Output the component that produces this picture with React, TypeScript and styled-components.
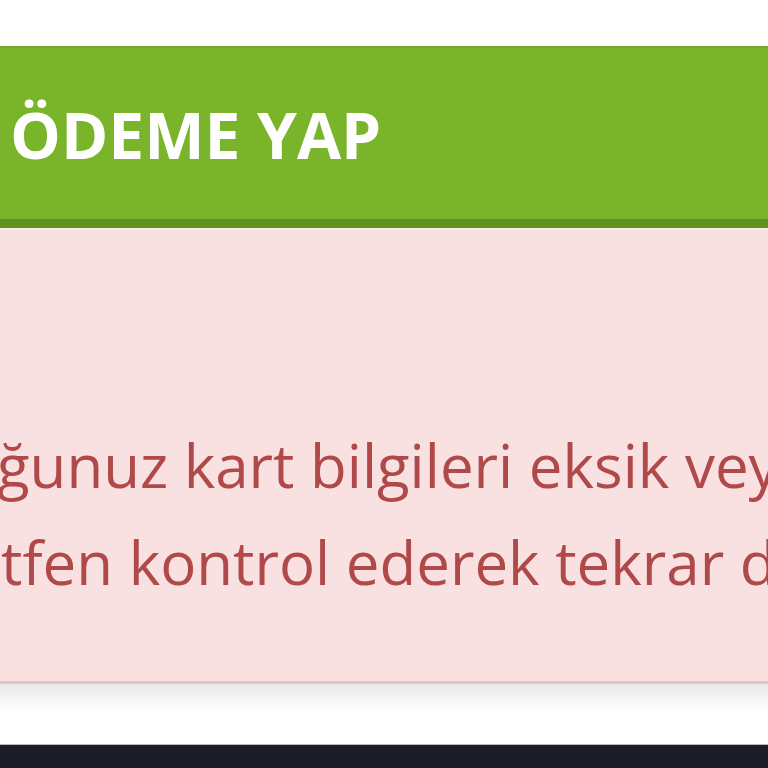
import React from "react";
import styled, { createGlobalStyle } from "styled-components";

const Global = createGlobalStyle`
  html, body { margin: 0; padding: 0; background: #ffffff; }
  body { overflow: hidden; font-family: "Open Sans", "Noto Sans", sans-serif; }
`;

const Page = styled.div`
  display: flex;
  flex-direction: column;
  width: 768px;
  height: 768px;
  overflow: hidden;
  background: #ffffff;
`;

const TopGap = styled.div`
  height: 46px;
  flex: none;
`;

const Header = styled.div`
  flex: none;
  height: 169px;
  display: flex;
  align-items: center;
  padding: 2px 0 0 10px;
  background: #7ab42a;
  border-top: 2px solid #74aa2a;
  border-bottom: 9px solid #5f921f;
  box-sizing: content-box;
`;

const Title = styled.h1`
  margin: 0;
  font-family: "Open Sans", sans-serif;
  font-weight: 700;
  font-size: 64px;
  line-height: 1;
  color: #ffffff;
  white-space: nowrap;
`;

const Alert = styled.div`
  flex: none;
  height: 456px;
  box-sizing: border-box;
  padding-top: 187px;
  background: #fae1e1;
  border-top: 2px solid #fbeaea;
  border-bottom: 3px solid #e6c4c4;
  overflow: hidden;
  color: #b04a4a;
`;

const Line = styled.div<{ $shift: number }>`
  font-family: "Open Sans", sans-serif;
  font-size: 60px;
  line-height: 97px;
  white-space: nowrap;
  margin-left: ${(p) => p.$shift}px;
`;

const Shadow = styled.div`
  flex: none;
  height: 28px;
  background: linear-gradient(#e9e9e9, #ffffff);
`;

const Gap = styled.div`
  flex: 1;
  background: #ffffff;
  border-bottom: 1px solid #b8b8b8;
`;

const Footer = styled.div`
  flex: none;
  height: 23px;
  background: #1b1d26;
`;

export default function App() {
  return (
    <>
      <Global />
      <Page>
        <TopGap />
        <Header>
          <Title>ÖDEME YAP</Title>
        </Header>
        <Alert>
          <Line $shift={-3}>ğunuz kart bilgileri eksik veya hatalı.</Line>
          <Line $shift={1}>tfen kontrol ederek tekrar deneyin.</Line>
        </Alert>
        <Shadow />
        <Gap />
        <Footer />
      </Page>
    </>
  );
}
